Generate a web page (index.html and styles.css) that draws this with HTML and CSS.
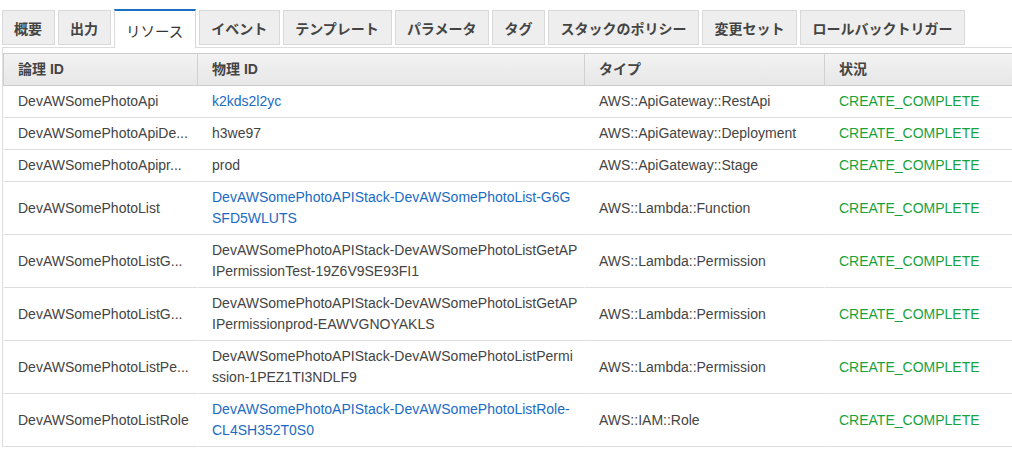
FILE: index.html
```html
<!DOCTYPE html>
<html lang="ja">
<head>
<meta charset="utf-8">
<title>リソース</title>
<link rel="stylesheet" href="styles.css">
</head>
<body>
<div class="tabs">
  <div class="tab">概要</div>
  <div class="tab">出力</div>
  <div class="tab active">リソース</div>
  <div class="tab">イベント</div>
  <div class="tab">テンプレート</div>
  <div class="tab">パラメータ</div>
  <div class="tab">タグ</div>
  <div class="tab">スタックのポリシー</div>
  <div class="tab">変更セット</div>
  <div class="tab">ロールバックトリガー</div>
</div>
<div class="panel">
  <table class="grid">
    <thead>
      <tr>
        <th class="c1">論理 ID</th>
        <th class="c2">物理 ID</th>
        <th class="c3">タイプ</th>
        <th class="c4">状況</th>
      </tr>
    </thead>
    <tbody>
      <tr>
        <td class="logical">DevAWSomePhotoApi</td>
        <td class="phys"><span class="link">k2kds2l2yc</span></td>
        <td>AWS::ApiGateway::RestApi</td>
        <td class="ok">CREATE_COMPLETE</td>
      </tr>
      <tr>
        <td class="logical">DevAWSomePhotoApiDe...</td>
        <td class="phys">h3we97</td>
        <td>AWS::ApiGateway::Deployment</td>
        <td class="ok">CREATE_COMPLETE</td>
      </tr>
      <tr>
        <td class="logical">DevAWSomePhotoApipr...</td>
        <td class="phys">prod</td>
        <td>AWS::ApiGateway::Stage</td>
        <td class="ok">CREATE_COMPLETE</td>
      </tr>
      <tr>
        <td class="logical">DevAWSomePhotoList</td>
        <td class="phys"><span class="link">DevAWSomePhotoAPIStack-DevAWSomePhotoList-G6GSFD5WLUTS</span></td>
        <td>AWS::Lambda::Function</td>
        <td class="ok">CREATE_COMPLETE</td>
      </tr>
      <tr>
        <td class="logical">DevAWSomePhotoListG...</td>
        <td class="phys">DevAWSomePhotoAPIStack-DevAWSomePhotoListGetAPIPermissionTest-19Z6V9SE93FI1</td>
        <td>AWS::Lambda::Permission</td>
        <td class="ok">CREATE_COMPLETE</td>
      </tr>
      <tr>
        <td class="logical">DevAWSomePhotoListG...</td>
        <td class="phys">DevAWSomePhotoAPIStack-DevAWSomePhotoListGetAPIPermissionprod-EAWVGNOYAKLS</td>
        <td>AWS::Lambda::Permission</td>
        <td class="ok">CREATE_COMPLETE</td>
      </tr>
      <tr>
        <td class="logical">DevAWSomePhotoListPe...</td>
        <td class="phys">DevAWSomePhotoAPIStack-DevAWSomePhotoListPermission-1PEZ1TI3NDLF9</td>
        <td>AWS::Lambda::Permission</td>
        <td class="ok">CREATE_COMPLETE</td>
      </tr>
      <tr>
        <td class="logical">DevAWSomePhotoListRole</td>
        <td class="phys"><span class="link">DevAWSomePhotoAPIStack-DevAWSomePhotoListRole-CL4SH352T0S0</span></td>
        <td>AWS::IAM::Role</td>
        <td class="ok">CREATE_COMPLETE</td>
      </tr>
    </tbody>
  </table>
</div>
</body>
</html>
```

FILE: styles.css
```css
html, body {
  margin: 0;
  padding: 0;
  background: #fff;
}
body {
  width: 1012px;
  height: 461px;
  overflow: hidden;
  font-family: "Liberation Sans", Arial, "Noto Sans CJK JP", sans-serif;
  font-size: 14px;
  color: #444;
}

.tabs {
  display: flex;
  align-items: flex-start;
  gap: 3px;
  padding: 9px 0 0 2px;
  height: 39px;
  position: relative;
  z-index: 1;
}
.tab {
  box-sizing: border-box;
  height: 35px;
  margin-top: 1px;
  padding: 0 12px 0 11px;
  border: 1px solid #d9d9d9;
  background: #eeeeee;
  display: flex;
  align-items: center;
  font-family: "Noto Sans CJK JP", sans-serif;
  font-size: 14px;
  font-weight: bold;
  color: #444;
  white-space: nowrap;
}
.tab.active {
  height: 39px;
  margin-top: 0;
  border-top: 2px solid #1a6fc0;
  border-bottom: none;
  background: #fff;
  font-weight: normal;
  font-size: 14.5px;
  color: #333;
  padding-top: 1px;
}

.panel {
  margin-top: -1px;
  margin-left: 2px;
  border-top: 1px solid #dddddd;
  border-left: 1px solid #dddddd;
  padding-top: 5px;
}

.grid {
  table-layout: fixed;
  border-collapse: separate;
  border-spacing: 0;
  width: 1009px;
}
.grid th, .grid td {
  box-sizing: border-box;
  padding: 5px 14px;
  line-height: 21px;
  text-align: left;
  vertical-align: middle;
  border-left: 1px solid transparent;
}
.grid th {
  font-family: "Liberation Sans", Arial, "Noto Sans CJK JP", sans-serif;
  font-weight: bold;
  color: #444;
  background: linear-gradient(#f2f2f2, #e7e7e7);
  border-top: 1px solid #cccccc;
  border-bottom: 1px solid #cccccc;
  border-left: 1px solid #d0d0d0;
}
.grid .c1 { width: 194px; }
.grid .c2 { width: 387px; }
.grid .c3 { width: 240px; }
.grid .c4 { width: 188px; }

.grid td {
  border-bottom: 1px solid #dddddd;
}
.grid td.logical {
  white-space: nowrap;
  overflow: hidden;
  padding-right: 4px;
}
.grid td.phys {
  word-break: break-all;
  padding-right: 4.5px;
}
.link {
  color: #1a6bc4;
}
.ok {
  color: #17a23c;
}
```
